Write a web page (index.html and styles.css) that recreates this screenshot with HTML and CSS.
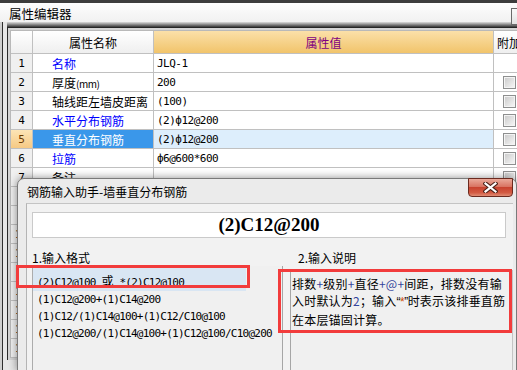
FILE: index.html
```html
<!DOCTYPE html>
<html lang="zh-CN">

<head>
    <meta charset="UTF-8">
    <meta name="viewport" content="width=device-width, initial-scale=1.0">
    <title>属性编辑器</title>
    <link rel="stylesheet" href="styles.css">
</head>

<body>
    <div class="editor">
        <div class="editor-title"><span>属性编辑器</span><span class="pin"></span></div>
        <div class="editor-frame">
            <div class="editor-band"></div>
            <div class="editor-body">
                <table class="grid">
                    <colgroup>
                        <col class="c-num">
                        <col class="c-name">
                        <col class="c-value">
                        <col class="c-extra">
                    </colgroup>
                    <thead>
                        <tr>
                            <th></th>
                            <th>属性名称</th>
                            <th class="h-value">属性值</th>
                            <th class="h-extra">附加</th>
                        </tr>
                    </thead>
                    <tbody>
                        <tr><td class="num">1</td><td class="name link">名称</td><td class="value">JLQ-1</td><td class="extra"></td></tr>
                        <tr><td class="num">2</td><td class="name">厚度<span class="unit">(mm)</span></td><td class="value">200</td><td class="extra"><span class="check"></span></td></tr>
                        <tr><td class="num">3</td><td class="name">轴线距左墙皮距离</td><td class="value">(100)</td><td class="extra"><span class="check"></span></td></tr>
                        <tr><td class="num">4</td><td class="name link">水平分布钢筋</td><td class="value">(2)ф12@200</td><td class="extra"><span class="check"></span></td></tr>
                        <tr class="current"><td class="num">5</td><td class="name">垂直分布钢筋</td><td class="value">(2)ф12@200</td><td class="extra"><span class="check"></span></td></tr>
                        <tr><td class="num">6</td><td class="name link">拉筋</td><td class="value">ф6@600*600</td><td class="extra"><span class="check"></span></td></tr>
                        <tr><td class="num">7</td><td class="name">备注</td><td class="value"></td><td class="extra"><span class="check"></span></td></tr>
                        <tr><td class="num">8</td><td class="name"></td><td class="value"></td><td class="extra"></td></tr>
                        <tr><td class="num">9</td><td class="name"></td><td class="value"></td><td class="extra"></td></tr>
                        <tr><td class="num">10</td><td class="name"></td><td class="value"></td><td class="extra"></td></tr>
                        <tr><td class="num">11</td><td class="name"></td><td class="value"></td><td class="extra"></td></tr>
                        <tr><td class="num">12</td><td class="name"></td><td class="value"></td><td class="extra"></td></tr>
                        <tr><td class="num">13</td><td class="name"></td><td class="value"></td><td class="extra"></td></tr>
                        <tr><td class="num">14</td><td class="name"></td><td class="value"></td><td class="extra"></td></tr>
                        <tr><td class="num">15</td><td class="name"></td><td class="value"></td><td class="extra"></td></tr>
                        <tr><td class="num">16</td><td class="name"></td><td class="value"></td><td class="extra"></td></tr>
                    </tbody>
                </table>
            </div>
        </div>
    </div>

    <div class="dialog">
        <div class="dialog-title">钢筋输入助手-墙垂直分布钢筋</div>
        <button class="dialog-close" type="button">
            <svg width="15" height="11" viewBox="0 0 15 11">
                <path d="M2.5 1.5 L12.5 9.5 M12.5 1.5 L2.5 9.5" stroke="#4a2118" stroke-width="4.2" stroke-linecap="square" fill="none" />
                <path d="M2.5 1.5 L12.5 9.5 M12.5 1.5 L2.5 9.5" stroke="#fff" stroke-width="2.2" stroke-linecap="square" fill="none" />
            </svg>
        </button>
        <div class="dialog-client">
            <div class="code-input">(2)C12@200</div>
            <div class="captions">
                <span class="cap-format">1.输入格式</span>
                <span>2.输入说明</span>
            </div>
            <div class="panes">
                <ul class="format-list">
                    <li class="selected">(2)C12@100 <span class="cjk">或</span> *(2)C12@100</li>
                    <li>(1)C12@200+(1)C14@200</li>
                    <li>(1)C12/(1)C14@100+(1)C12/C10@100</li>
                    <li>(1)C12@200/(1)C14@100+(1)C12@100/C10@200</li>
                </ul>
                <div class="note">
                    排数<span class="sym">+</span>级别<span class="sym">+</span>直径<span class="sym">+@+</span>间距，排数没有输<br>
                    入时默认为<span class="sym">2</span>；输入<span class="quote">“<b>*</b>”</span>时表示该排垂直筋<br>
                    在本层锚固计算。
                </div>
            </div>
        </div>
    </div>

    <!-- red annotation frames -->
    <div class="mark mark-format"></div>
    <div class="mark mark-note"></div>
</body>

</html>
```

FILE: styles.css
```css
body {
    margin: 0;
    width: 517px;
    height: 370px;
    overflow: hidden;
    position: relative;
    font-family: "Noto Sans CJK SC", "Noto Sans", sans-serif;
    font-size: 12px;
    color: #000;
    background: #e4e4e4;
}

/* property editor window */

.editor {
    height: 367px;
    overflow: hidden;
    border-top: 3px solid #3c3c3c;
    background: linear-gradient(to right, #cfcfcf 0 2px, #2e2e2e 2px 3px, #e6e6e6 3px);
}

.editor-title {
    display: flex;
    justify-content: space-between;
    box-sizing: border-box;
    height: 19px;
    padding: 2px 0 0 9px;
    line-height: 17px;
    font-size: 12.5px;
    background: linear-gradient(#fdfdfd, #f1f1f1);
}

.pin {
    width: 16px;
    height: 17px;
    margin: 3px -10px 0 0;
    box-sizing: border-box;
    border: 1px solid #6a6a6a;
    background: linear-gradient(#fafafa, #e2e2e2);
}

.editor-frame {
    margin-left: 7px;
}

.editor-band {
    height: 6px;
    background: linear-gradient(#dcdcdc, #161616);
}

.editor-body {
    border-left: 1px solid #2a2a2a;
    padding: 2px 0 0 2px;
    background: #d4d4d4;
    height: 330px;
    overflow: hidden;
}

.grid {
    border-collapse: separate;
    border-spacing: 0;
    table-layout: fixed;
    width: 524px;
    border-top: 1px solid #b9b9b9;
    border-left: 1px solid #b9b9b9;
    background: #fff;
}

.c-num {
    width: 22px;
}

.c-name {
    width: 121px;
}

.c-value {
    width: 340px;
}

.c-extra {
    width: 40px;
}

.grid tr {
    height: 19px;
}

.grid thead tr {
    height: 23px;
}

.grid th,
.grid td {
    padding: 0;
    border-right: 1px solid #c0c0c0;
    border-bottom: 1px solid #c0c0c0;
    white-space: nowrap;
    overflow: hidden;
    vertical-align: middle;
}

.grid th {
    font-weight: normal;
    font-size: 12px;
    text-align: center;
    background: linear-gradient(#ffffff, #efefef);
}

.grid th.h-value {
    color: #800080;
    background: linear-gradient(#fbe0a9, #f1c46b);
}

.grid th.h-extra {
    text-align: left;
    padding-left: 3px;
}

.num {
    text-align: center;
    background: #f0f0f0;
    font-family: "DejaVu Sans Mono", monospace;
    font-size: 11px;
}

.name {
    padding-left: 19px !important;
}

.name.link {
    color: #0000ff;
}

.unit {
    font-size: 10px;
    letter-spacing: -0.5px;
}

.value {
    padding-left: 3px !important;
    font-family: "DejaVu Sans Mono", "Noto Sans CJK SC", monospace;
    font-size: 11px;
    letter-spacing: -0.5px;
}

.extra {
    padding-left: 9px !important;
}

.check {
    display: block;
    width: 13px;
    height: 13px;
    box-sizing: border-box;
    border: 1px solid #8e8f8f;
    background: linear-gradient(135deg, #c9c9c9, #f8f8f8);
    box-shadow: inset 0 0 0 1px #f4f4f4;
}

.current .num {
    color: #6a3a00;
    background: linear-gradient(#fce4b6, #f6c984);
}

.current .name {
    color: #fff;
    background: #3a97ea;
}

.current .value {
    background: #ddeefc;
}

/* rebar input dialog */

.dialog {
    position: absolute;
    left: 17px;
    top: 178px;
    width: 500px;
    height: 193px;
    box-sizing: border-box;
    border: 1px solid #7a7a7a;
    border-radius: 7px 7px 0 0;
    background: #ebebeb;
    box-shadow: 0 0 9px rgba(0, 0, 0, 0.45);
}

.dialog-title {
    box-sizing: border-box;
    height: 24px;
    padding: 2px 0 0 9px;
    line-height: 22px;
}

.dialog-close {
    position: absolute;
    top: -1px;
    right: 3px;
    width: 45px;
    height: 19px;
    padding: 0;
    display: flex;
    align-items: center;
    justify-content: center;
    border: 1px solid #6b2a1f;
    border-radius: 0 0 4px 4px;
    background: linear-gradient(#eaa999, #d97462 45%, #c8432f 50%, #d35a42 80%, #e08c74);
}

.dialog-client {
    margin: 0 3px 0 8px;
    height: 158px;
    padding: 8px 7px 0 5px;
    border-left: 1px solid #b4b4b4;
    border-top: 1px solid #c4c4c4;
    background: #f2f2f2;
}

.code-input {
    height: 26px;
    box-sizing: border-box;
    border: 1px solid #cacaca;
    background: #fff;
    text-align: center;
    font: bold 19px/24px "Liberation Serif", serif;
}

.captions {
    display: flex;
    margin-top: 12px;
    height: 16px;
    line-height: 16px;
}

.cap-format {
    width: 266px;
}

.panes {
    display: flex;
    margin-right: -7px;
    height: 104px;
}

.format-list {
    list-style: none;
    margin: 0;
    padding: 2px 0 0;
    width: 251px;
    box-sizing: border-box;
    border-left: 1px solid #acacac;
    border-right: 1px solid #a6a6a6;
    background: #f0f0f0;
    font-family: "DejaVu Sans Mono", monospace;
    font-size: 11px;
    letter-spacing: -0.75px;
}

.format-list li {
    padding-left: 4px;
    line-height: 17px;
    white-space: nowrap;
}

.format-list li.selected {
    padding-top: 4px;
    margin-right: 36px;
    background: #d9e6f3;
}

.cjk {
    font-family: "Noto Sans CJK SC", sans-serif;
    font-size: 12px;
    letter-spacing: 0;
}

.note {
    flex: 1;
    margin: 4px 0 0 7px;
    padding: 5px 0 0 1px;
    border-left: 1px solid #a6a6a6;
    border-right: 1px solid #c4c4c4;
    background: #f0f0f0;
    line-height: 17px;
    letter-spacing: 0.2px;
    white-space: nowrap;
}

.sym {
    color: #33449c;
}

.quote {
    font-family: "Liberation Sans", sans-serif;
    letter-spacing: -0.5px;
}

.quote b {
    font-weight: normal;
    color: #d04a00;
}

/* annotation */

.mark {
    position: absolute;
    box-sizing: border-box;
    border: 3px solid #f23c3c;
}

.mark-format {
    left: 16px;
    top: 265px;
    width: 234px;
    height: 23px;
}

.mark-note {
    left: 278px;
    top: 269px;
    width: 234px;
    height: 64px;
}
```
